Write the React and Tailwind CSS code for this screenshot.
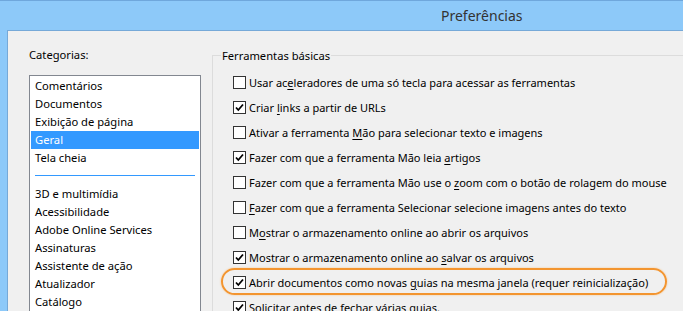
const categoriasTopo = ["Comentários", "Documentos", "Exibição de página", "Geral", "Tela cheia"];
const categoriasBaixo = [
  "3D e multimídia",
  "Acessibilidade",
  "Adobe Online Services",
  "Assinaturas",
  "Assistente de ação",
  "Atualizador",
  "Catálogo",
];

// [antes, letra sublinhada, depois, marcado]
const opcoes = [
  ["Usar ac", "e", "leradores de uma só tecla para acessar as ferramentas", false],
  ["Criar ", "l", "inks a partir de URLs", true],
  ["Ativar a ferramenta ", "M", "ão para selecionar texto e imagens", false],
  ["Fazer com que a ferramenta Mão leia ", "a", "rtigos", true],
  ["Fazer com que a ferramenta Mão use o ", "z", "oom com o botão de rolagem do mouse", false],
  ["", "F", "azer com que a ferramenta Selecionar selecione imagens antes do texto", false],
  ["M", "o", "strar o armazenamento online ao abrir os arquivos", false],
  ["Mostrar o armazenamento online ao ", "s", "alvar os arquivos", true],
  ["Abrir documentos como novas ", "g", "uias na mesma janela (requer reinicialização)", true],
  ["Solicitar antes de fechar várias guias.", "", "", true],
];

function Checkbox({ checked }) {
  return (
    <span className="w-[13px] h-[13px] shrink-0 border border-[#333] bg-white flex items-center justify-center">
      {checked && (
        <svg width="9" height="9" viewBox="0 0 9 9">
          <path d="M1 4.5 L3.3 7 L8 1.5" fill="none" stroke="#000" strokeWidth="1.8" />
        </svg>
      )}
    </span>
  );
}

export default function App() {
  return (
    <div
      className="w-[683px] h-[311px] overflow-hidden bg-[#8dc9f9] border-t border-[#6fa7dc] flex flex-col text-[11.2px] text-black"
      style={{ fontFamily: '"Noto Sans", "Open Sans", sans-serif' }}
    >
      {/* Barra de título */}
      <div className="h-[29px] shrink-0 flex items-center pl-[441px] text-[14px] text-[#333]">
        Preferências
      </div>

      <div className="flex-1 ml-[7px] bg-[#f0f0f0] border-l border-t border-[#76a9d8] flex">
        {/* Categorias */}
        <div className="w-[204px] shrink-0 pl-[21px] pt-[15px] flex flex-col">
          <div className="h-[18px] leading-[18px]">Categorias:</div>
          <div className="mt-[11px] w-[172px] flex-1 border border-[#828790] bg-white px-[1px] pt-[1px]">
            {categoriasTopo.map((c) => (
              <div
                key={c}
                className={`h-[18px] leading-[18px] pl-[4px] ${c === "Geral" ? "bg-[#3399ff] text-white" : ""}`}
              >
                {c}
              </div>
            ))}
            <div className="mx-[4px] mt-[8px] mb-[9px] h-px bg-[#3399ff]" />
            {categoriasBaixo.map((c) => (
              <div key={c} className="h-[18px] leading-[18px] pl-[4px]">
                {c}
              </div>
            ))}
          </div>
        </div>

        {/* Ferramentas básicas */}
        <div className="flex-1 pt-[24px] relative">
          <div className="h-full border-l border-t border-[#dcdcdc] relative">
            <div className="absolute -top-[9px] left-[8px] px-[1px] bg-[#f0f0f0] leading-[18px]">
              Ferramentas básicas
            </div>
            <div className="pt-[20px] pl-[20px] flex flex-col gap-[12px] text-[11px]">
              {opcoes.map(([a, u, b, checked], i) => (
                <div key={i} className="h-[13px] flex items-center gap-[3px] whitespace-nowrap">
                  <Checkbox checked={checked} />
                  <span className="leading-[18px]">
                    {a}
                    {u && <span className="underline underline-offset-2">{u}</span>}
                    {b}
                  </span>
                </div>
              ))}
            </div>
            <div className="absolute left-[8px] top-[212px] w-[446px] h-[27px] rounded-full border-2 border-[#f39530] shadow-[0_0_2px_#f8c080]" />
          </div>
        </div>
      </div>
    </div>
  );
}
